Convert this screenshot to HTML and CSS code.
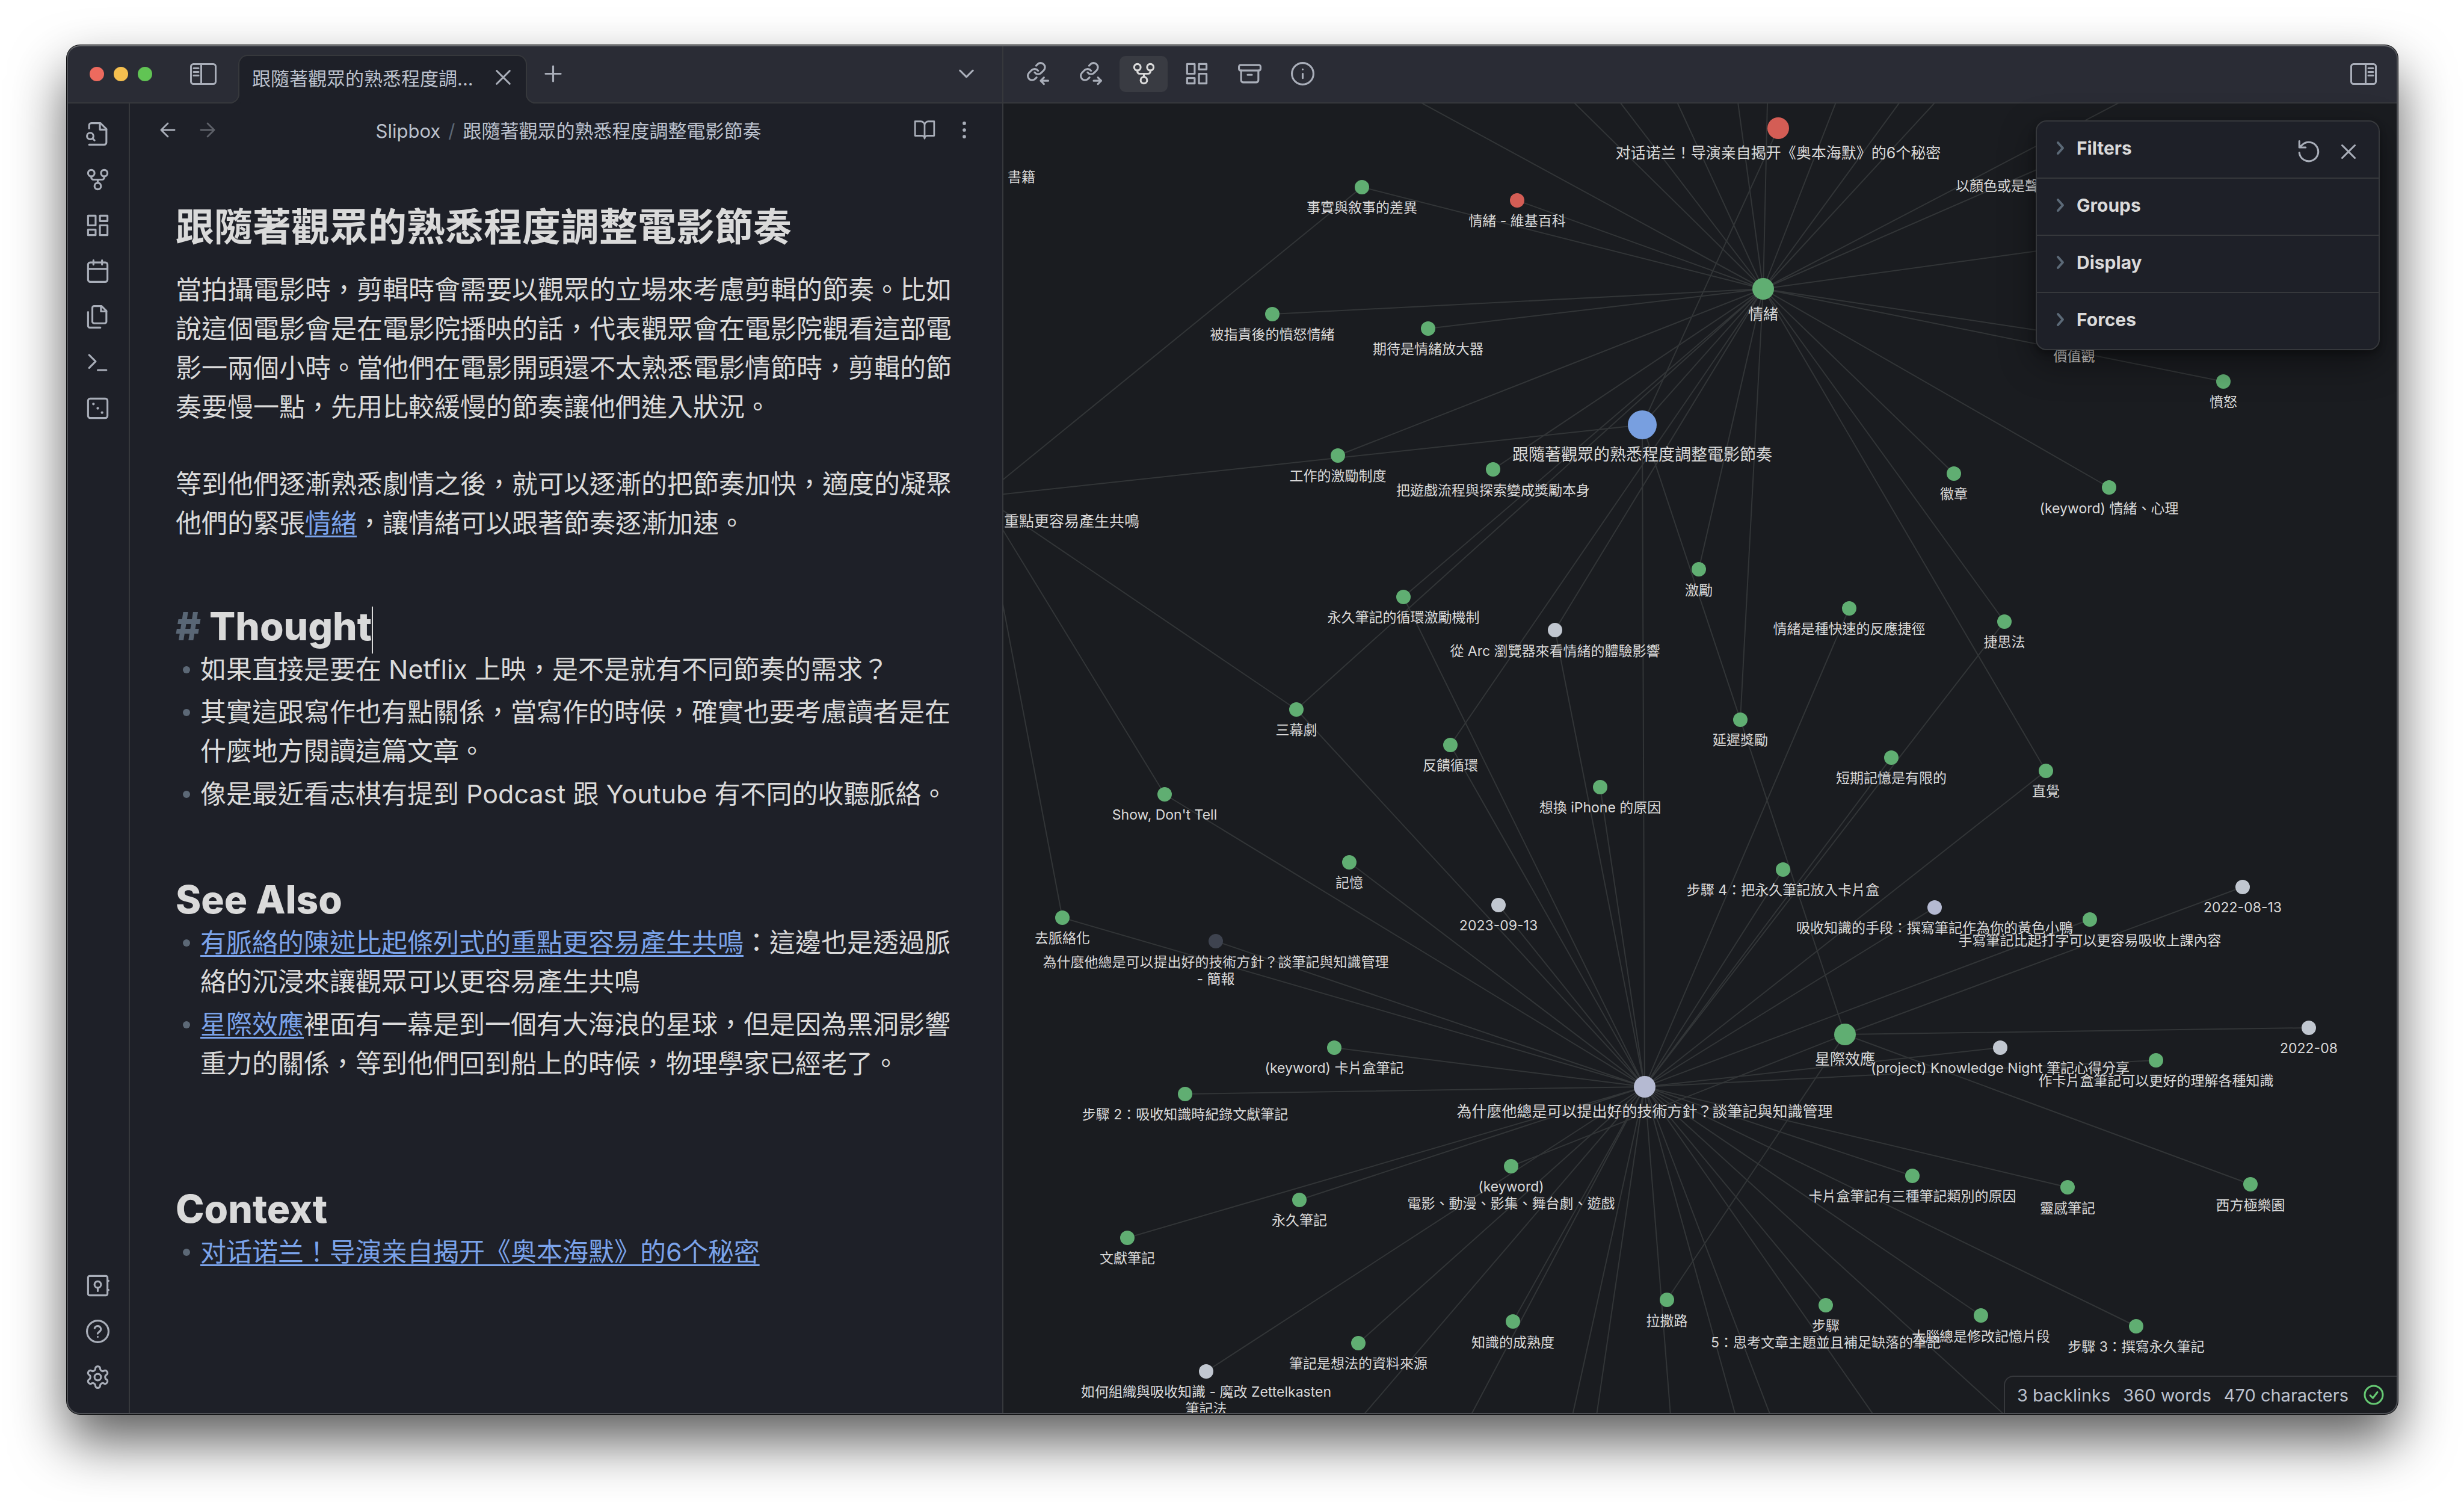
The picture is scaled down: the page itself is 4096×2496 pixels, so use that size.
FILE: index.html
```html
<!DOCTYPE html>
<html lang="zh-Hant">
<head>
<meta charset="utf-8">
<title>跟隨著觀眾的熟悉程度調整電影節奏</title>
<link rel="stylesheet" href="styles.css">
</head>
<body>
<svg class="sprite" aria-hidden="true">
  <symbol id="i-fork" viewBox="0 0 24 24"><circle cx="12" cy="18" r="3"/><circle cx="6" cy="6" r="3"/><circle cx="18" cy="6" r="3"/><path d="M18 9v1a2 2 0 0 1-2 2H8a2 2 0 0 1-2-2V9M12 12v3"/></symbol>
  <symbol id="i-dash" viewBox="0 0 24 24"><path d="M3 3h7v9H3zM14 3h7v5h-7zM14 12h7v9h-7zM3 16h7v5H3z"/></symbol>
  <symbol id="i-x" viewBox="0 0 24 24"><path d="M18 6 6 18M6 6l12 12"/></symbol>
  <symbol id="i-chev" viewBox="0 0 14 24"><path d="m3 3 8 9-8 9"/></symbol>
</svg>
<div class="window">
  <section class="left">
    <header class="bar">
      <div class="lights"><i class="light light-red"></i><i class="light light-yellow"></i><i class="light light-green"></i></div>
      <button class="icon-btn sidebar-btn" aria-label="Toggle left sidebar"><svg class="panel-icon" viewBox="0 0 44 36"><rect x="1.5" y="1.5" width="41" height="33" rx="4"/><path d="M18.5 2v32M6 8.500h8M6 14.500h8M6 20.500h8"/></svg></button>
      <div class="tab"><span>跟隨著觀眾的熟悉程度調...</span><button class="icon-btn tab-close" aria-label="Close tab"><svg class="icon" viewBox="0 0 24 24"><use href="#i-x"/></svg></button></div>
      <button class="icon-btn new-tab" aria-label="New tab"><svg class="icon" viewBox="0 0 24 24"><path d="M12 5v14M5 12h14"/></svg></button>
      <button class="icon-btn tab-list" aria-label="Tab list"><svg class="icon" viewBox="0 0 24 24"><path d="m6 9 6 6 6-6"/></svg></button>
    </header>
    <div class="body">
      <nav class="ribbon">
        <button class="icon-btn" aria-label="Quick switcher"><svg class="icon" viewBox="0 0 24 24"><path d="M4 22h14a2 2 0 0 0 2-2V7.500L14.500 2H6a2 2 0 0 0-2 2v3"/><path d="M14 2v6h6M5 17a3 3 0 1 0 0-6 3 3 0 0 0 0 6zM9 18l-1.500-1.500"/></svg></button>
        <button class="icon-btn" aria-label="Graph view"><svg class="icon" viewBox="0 0 24 24"><use href="#i-fork"/></svg></button>
        <button class="icon-btn" aria-label="Canvas"><svg class="icon" viewBox="0 0 24 24"><use href="#i-dash"/></svg></button>
        <button class="icon-btn" aria-label="Daily note"><svg class="icon" viewBox="0 0 24 24"><rect x="3" y="4" width="18" height="18" rx="2"/><path d="M16 2v4M8 2v4M3 10h18"/></svg></button>
        <button class="icon-btn" aria-label="Templates"><svg class="icon" viewBox="0 0 24 24"><path d="M15.500 2H8.600c-.4 0-.8.2-1.100.5-.3.3-.5.7-.5 1.100v12.800c0 .4.2.8.5 1.100.3.3.7.5 1.100.5h9.800c.4 0 .8-.2 1.100-.5.3-.3.5-.7.5-1.100V6.500L15.500 2z"/><path d="M3 7.600v12.800c0 .4.2.8.5 1.100.3.3.7.5 1.100.5h9.800M15 2v5h5"/></svg></button>
        <button class="icon-btn" aria-label="Command palette"><svg class="icon" viewBox="0 0 24 24"><path d="m4 17 6-6-6-6M12 19h8"/></svg></button>
        <button class="icon-btn" aria-label="Random note"><svg class="icon" viewBox="0 0 24 24"><rect x="3" y="3" width="18" height="18" rx="2"/><path d="M8 8h.01M12 12h.01M16 16h.01" class="dots"/></svg></button>
        <button class="icon-btn push" aria-label="Open another vault"><svg class="icon" viewBox="0 0 24 24"><rect x="3" y="3" width="18" height="18" rx="1.500"/><circle cx="12" cy="11" r="3"/><path d="M12 14v3M21 7.500h1M21 16h1"/></svg></button>
        <button class="icon-btn" aria-label="Help"><svg class="icon" viewBox="0 0 24 24"><circle cx="12" cy="12" r="10"/><path d="M9.090 9a3 3 0 0 1 5.830 1c0 2-3 3-3 4M12 17h.01"/></svg></button>
        <button class="icon-btn" aria-label="Settings"><svg class="icon" viewBox="0 0 24 24"><path d="M12.220 2h-.44a2 2 0 0 0-2 2v.18a2 2 0 0 1-1 1.730l-.43.25a2 2 0 0 1-2 0l-.15-.08a2 2 0 0 0-2.730.73l-.22.38a2 2 0 0 0 .73 2.730l.15.1a2 2 0 0 1 1 1.720v.51a2 2 0 0 1-1 1.740l-.15.09a2 2 0 0 0-.73 2.730l.22.38a2 2 0 0 0 2.730.73l.15-.08a2 2 0 0 1 2 0l.43.25a2 2 0 0 1 1 1.730V20a2 2 0 0 0 2 2h.44a2 2 0 0 0 2-2v-.18a2 2 0 0 1 1-1.730l.43-.25a2 2 0 0 1 2 0l.15.08a2 2 0 0 0 2.730-.73l.22-.39a2 2 0 0 0-.73-2.730l-.15-.08a2 2 0 0 1-1-1.740v-.5a2 2 0 0 1 1-1.740l.15-.09a2 2 0 0 0 .73-2.730l-.22-.38a2 2 0 0 0-2.730-.73l-.15.08a2 2 0 0 1-2 0l-.43-.25a2 2 0 0 1-1-1.730V4a2 2 0 0 0-2-2z"/><circle cx="12" cy="12" r="3"/></svg></button>
      </nav>
      <main class="note">
        <div class="view-header">
          <button class="icon-btn" aria-label="Back"><svg class="icon" viewBox="0 0 24 24"><path d="m12 19-7-7 7-7M19 12H5"/></svg></button>
          <button class="icon-btn faded" aria-label="Forward"><svg class="icon" viewBox="0 0 24 24"><path d="M5 12h14M12 5l7 7-7 7"/></svg></button>
          <div class="crumbs"><span>Slipbox</span><span class="slash">/</span><span>跟隨著觀眾的熟悉程度調整電影節奏</span></div>
          <button class="icon-btn" aria-label="Reading view"><svg class="icon" viewBox="0 0 24 24"><path d="M2 3h6a4 4 0 0 1 4 4v14a3 3 0 0 0-3-3H2zM22 3h-6a4 4 0 0 0-4 4v14a3 3 0 0 1 3-3h7z"/></svg></button>
          <button class="icon-btn" aria-label="More options"><svg class="icon" viewBox="0 0 24 24"><path d="M12 5h.01M12 12h.01M12 19h.01" class="more-dots"/></svg></button>
        </div>
        <article class="editor">
          <h1>跟隨著觀眾的熟悉程度調整電影節奏</h1>
          <p>當拍攝電影時，剪輯時會需要以觀眾的立場來考慮剪輯的節奏。比如說這個電影會是在電影院播映的話，代表觀眾會在電影院觀看這部電影一兩個小時。當他們在電影開頭還不太熟悉電影情節時，剪輯的節奏要慢一點，先用比較緩慢的節奏讓他們進入狀況。</p>
          <p>等到他們逐漸熟悉劇情之後，就可以逐漸的把節奏加快，適度的凝聚他們的緊張<a href="#emotion">情緒</a>，讓情緒可以跟著節奏逐漸加速。</p>
          <h2 class="first"><span class="hash">#</span> Thought<span class="caret"></span></h2>
          <ul>
            <li>如果直接是要在 Netflix 上映，是不是就有不同節奏的需求？</li>
            <li>其實這跟寫作也有點關係，當寫作的時候，確實也要考慮讀者是在什麼地方閱讀這篇文章。</li>
            <li>像是最近看志棋有提到 Podcast 跟 Youtube 有不同的收聽脈絡。</li>
          </ul>
          <h2 class="second">See Also</h2>
          <ul>
            <li><a href="#context">有脈絡的陳述比起條列式的重點更容易產生共鳴</a>：這邊也是透過脈絡的沉浸來讓觀眾可以更容易產生共鳴</li>
            <li><a href="#interstellar">星際效應</a>裡面有一幕是到一個有大海浪的星球，但是因為黑洞影響重力的關係，等到他們回到船上的時候，物理學家已經老了。</li>
          </ul>
          <h2 class="third">Context</h2>
          <ul>
            <li><a href="#nolan">对话诺兰！导演亲自揭开《奥本海默》的6个秘密</a></li>
          </ul>
        </article>
      </main>
    </div>
  </section>
  <section class="right">
    <header class="bar bar-right">
      <button class="icon-btn tool" aria-label="Backlinks"><svg class="icon" viewBox="0 0 24 24"><g transform="translate(.9 .4) scale(.8)" class="chain"><path d="M10 13a5 5 0 0 0 7.540.54l3-3a5 5 0 0 0-7.070-7.070l-1.720 1.710"/><path d="M14 11a5 5 0 0 0-7.540-.54l-3 3a5 5 0 0 0 7.070 7.070l1.710-1.710"/></g><path d="M21.500 18.500h-7M17.500 15.500l-3 3 3 3"/></svg></button>
      <button class="icon-btn tool" aria-label="Outgoing links"><svg class="icon" viewBox="0 0 24 24"><g transform="translate(.9 .4) scale(.8)" class="chain"><path d="M10 13a5 5 0 0 0 7.540.54l3-3a5 5 0 0 0-7.070-7.070l-1.720 1.710"/><path d="M14 11a5 5 0 0 0-7.540-.54l-3 3a5 5 0 0 0 7.070 7.070l1.710-1.710"/></g><path d="M14.500 18.500h7M18.500 15.500l3 3-3 3"/></svg></button>
      <button class="icon-btn tool active" aria-label="Graph"><svg class="icon" viewBox="0 0 24 24"><use href="#i-fork"/></svg></button>
      <button class="icon-btn tool" aria-label="Dashboard"><svg class="icon" viewBox="0 0 24 24"><use href="#i-dash"/></svg></button>
      <button class="icon-btn tool" aria-label="Archive"><svg class="icon" viewBox="0 0 24 24"><rect x="2" y="4" width="20" height="5" rx="1.500"/><path d="M4 9v9a2 2 0 0 0 2 2h12a2 2 0 0 0 2-2V9M10 13h4"/></svg></button>
      <button class="icon-btn tool" aria-label="Info"><svg class="icon" viewBox="0 0 24 24"><circle cx="12" cy="12" r="10"/><path d="M12 16v-4M12 8h.01"/></svg></button>
      <button class="icon-btn sidebar-btn" aria-label="Toggle right sidebar"><svg class="panel-icon" viewBox="0 0 44 36"><rect x="1.500" y="1.500" width="41" height="33" rx="4"/><path d="M25.500 2v32M30 8.500h8M30 14.500h8M30 20.500h8"/></svg></button>
    </header>
    <div class="graph">
      <svg class="canvas" width="100%" height="100%" role="img" aria-label="Graph view">
        <g class="links">
          <path d="M1263 308 693-2M1263 308 948-2M1263 308 1025-2M1263 308 1120-2M1263 308 1221-2M1263 308 1270-2M1263 308 1384-2M1263 308 1490-2M1263 308 1549-2M1263 308 1856-2"/>
          <path d="M1263 308 1736 102M1263 308 1900 220M1263 308 1780 386M1263 308 2028 462M1263 308 1838 638M1263 308 1580 615M1263 308 1664 861M1263 308 1733 1109"/>
          <path d="M1263 308 596 139M1263 308 854 161M1263 308 447 350M1263 308 706 374M1263 308 556 585M1263 308 814 608M1263 308 665 820M1263 308 487 1007M1263 308 743 1066M1263 308 917 875M1263 308 1062 534M1263 308 1156 774M1263 308 1225 1024"/>
          <path d="M1062 534 1288 41M1062 534-35 653M1062 534 1066 1634M1062 534 1399 1547"/>
          <path d="M-35 653 596 139M-35 653 487 1007M-35 653 268 1148M-35 653 98 1353"/>
          <path d="M1066 1634 665 820M1066 1634 487 1007M1066 1634 743 1066M1066 1634 268 1148M1066 1634 575 1261M1066 1634 98 1353M1066 1634 353 1392M1066 1634 823 1332M1066 1634 917 875M1066 1634 992 1136M1066 1634 1406 839M1066 1634 1296 1273M1066 1634 1476 1087M1066 1634 1664 861M1066 1634 1733 1109M1066 1634 1548 1336M1066 1634 1806 1356M1066 1634 1657 1569M1066 1634 1916 1590"/>
          <path d="M1066 1634 550 1569M1066 1634 302 1646M1066 1634 206 1885M1066 1634 492 1822M1066 1634 337 2107M1066 1634 590 2060M1066 1634 847 2024M1066 1634 1511 1782M1066 1634 1769 1801M1066 1634 1367 1997M1066 1634 1625 2014M1066 1634 1883 2032"/>
          <path d="M1066 1634 598 2180M1066 1634 777 2180M1066 1634 946 2180M1066 1634 986 2180M1066 1634 1109 2180M1066 1634 1217 2180M1066 1634 1275 2180M1066 1634 1447 2180M1066 1634 1665 2180"/>
          <path d="M1399 1547 2170 1536M1399 1547 2060 1302M1399 1547 2073 1796M1399 1547 1103 1988M1399 1547 844 1766"/>
        </g>
        <g class="dots-green">
          <circle cx="596" cy="139" r="12"/><circle cx="447" cy="350" r="12"/><circle cx="706" cy="374" r="12"/><circle cx="556" cy="585" r="12"/><circle cx="814" cy="608" r="12"/><circle cx="1263" cy="308" r="18"/><circle cx="1580" cy="615" r="12"/><circle cx="2028" cy="462" r="12"/><circle cx="1838" cy="638" r="12"/><circle cx="665" cy="820" r="12"/><circle cx="487" cy="1007" r="12"/><circle cx="743" cy="1066" r="12"/><circle cx="268" cy="1148" r="12"/><circle cx="575" cy="1261" r="12"/><circle cx="98" cy="1353" r="12"/><circle cx="1156" cy="774" r="12"/><circle cx="1406" cy="839" r="12"/><circle cx="1225" cy="1024" r="12"/><circle cx="1476" cy="1087" r="12"/><circle cx="992" cy="1136" r="12"/><circle cx="1296" cy="1273" r="12"/><circle cx="1664" cy="861" r="12"/><circle cx="1733" cy="1109" r="12"/><circle cx="1806" cy="1356" r="12"/><circle cx="550" cy="1569" r="12"/><circle cx="302" cy="1646" r="12"/><circle cx="492" cy="1822" r="12"/><circle cx="206" cy="1885" r="12"/><circle cx="844" cy="1766" r="12"/><circle cx="847" cy="2024" r="12"/><circle cx="590" cy="2060" r="12"/><circle cx="1103" cy="1988" r="12"/><circle cx="1399" cy="1547" r="18"/><circle cx="1916" cy="1590" r="12"/><circle cx="1511" cy="1782" r="12"/><circle cx="1769" cy="1801" r="12"/><circle cx="2073" cy="1796" r="12"/><circle cx="1367" cy="1997" r="12"/><circle cx="1625" cy="2014" r="12"/><circle cx="1883" cy="2032" r="12"/>
        </g>
        <g class="dots-red"><circle cx="854" cy="161" r="12"/><circle cx="1288" cy="41" r="18"/></g>
        <g class="dots-grey"><circle cx="917" cy="875" r="12"/><circle cx="823" cy="1332" r="12"/><circle cx="2060" cy="1302" r="12"/><circle cx="1657" cy="1569" r="12"/><circle cx="2170" cy="1536" r="12"/><circle cx="337" cy="2107" r="12"/></g>
        <g class="dots-lavender"><circle cx="1548" cy="1336" r="12"/><circle cx="1066" cy="1634" r="18"/></g>
        <circle class="dot-dark" cx="353" cy="1392" r="12"/>
        <circle class="dot-active" cx="1062" cy="534" r="24"/>
        <g class="labels">
          <text x="30" y="130">書籍</text>
          <text x="596" y="181">事實與敘事的差異</text>
          <text x="854" y="203">情緒 - 維基百科</text>
          <text x="447" y="392">被指責後的憤怒情緒</text>
          <text x="706" y="416">期待是情緒放大器</text>
          <text x="556" y="627">工作的激勵制度</text>
          <text x="814" y="651">把遊戲流程與探索變成獎勵本身</text>
          <text x="1583" y="145" class="start">以顏色或是聲</text>
          <text x="1780" y="428">價值觀</text>
          <text x="2028" y="504">憤怒</text>
          <text x="1580" y="657">徽章</text>
          <text x="1838" y="681">(keyword) 情緒、心理</text>
          <text x="665" y="862">永久筆記的循環激勵機制</text>
          <text x="487" y="1049">三幕劇</text>
          <text x="743" y="1108">反饋循環</text>
          <text x="268" y="1190">Show, Don't Tell</text>
          <text x="575" y="1303">記憶</text>
          <text x="98" y="1395">去脈絡化</text>
          <text x="353" y="1435">為什麼他總是可以提出好的技術方針？談筆記與知識管理<tspan x="353" dy="28">- 簡報</tspan></text>
          <text x="1156" y="817">激勵</text>
          <text x="917" y="918">從 Arc 瀏覽器來看情緒的體驗影響</text>
          <text x="1406" y="881">情緒是種快速的反應捷徑</text>
          <text x="1225" y="1066">延遲獎勵</text>
          <text x="1476" y="1129">短期記憶是有限的</text>
          <text x="992" y="1178">想換 iPhone 的原因</text>
          <text x="1296" y="1315">步驟 4：把永久筆記放入卡片盒</text>
          <text x="823" y="1374">2023-09-13</text>
          <text x="1548" y="1378">吸收知識的手段：撰寫筆記作為你的黃色小鴨</text>
          <text x="1806" y="1399">手寫筆記比起打字可以更容易吸收上課內容</text>
          <text x="1664" y="903">捷思法</text>
          <text x="1733" y="1151">直覺</text>
          <text x="2060" y="1344">2022-08-13</text>
          <text x="550" y="1611">(keyword) 卡片盒筆記</text>
          <text x="302" y="1688">步驟 2：吸收知識時紀錄文獻筆記</text>
          <text x="492" y="1864">永久筆記</text>
          <text x="206" y="1927">文獻筆記</text>
          <text x="844" y="1808">(keyword)<tspan x="844" dy="28">電影、動漫、影集、舞台劇、遊戲</tspan></text>
          <text x="847" y="2067">知識的成熟度</text>
          <text x="590" y="2102">筆記是想法的資料來源</text>
          <text x="1103" y="2031">拉撒路</text>
          <text x="337" y="2149">如何組織與吸收知識 - 魔改 Zettelkasten<tspan x="337" dy="28">筆記法</tspan></text>
          <text x="1657" y="1611">(project) Knowledge Night 筆記心得分享</text>
          <text x="1916" y="1632">作卡片盒筆記可以更好的理解各種知識</text>
          <text x="2170" y="1578">2022-08</text>
          <text x="1511" y="1824">卡片盒筆記有三種筆記類別的原因</text>
          <text x="1769" y="1844">靈感筆記</text>
          <text x="2073" y="1839">西方極樂園</text>
          <text x="1367" y="2039">步驟<tspan x="1367" dy="28">5：思考文章主題並且補足缺落的筆記</tspan></text>
          <text x="1625" y="2057">大腦總是修改記憶片段</text>
          <text x="1883" y="2074">步驟 3：撰寫永久筆記</text>
        </g>
        <g class="labels labels-big">
          <text x="1288" y="91">对话诺兰！导演亲自揭开《奥本海默》的6个秘密</text>
          <text x="1263" y="359">情緒</text>
          <text x="226" y="703" class="end">有脈絡的陳述比起條列式的重點更容易產生共鳴</text>
          <text x="1066" y="1684">為什麼他總是可以提出好的技術方針？談筆記與知識管理</text>
          <text x="1399" y="1597">星際效應</text>
        </g>
        <text class="label-active" x="1062" y="593">跟隨著觀眾的熟悉程度調整電影節奏</text>
      </svg>
      <div class="controls">
        <button class="row"><svg class="chev" viewBox="0 0 14 24"><use href="#i-chev"/></svg>Filters</button>
        <button class="row"><svg class="chev" viewBox="0 0 14 24"><use href="#i-chev"/></svg>Groups</button>
        <button class="row"><svg class="chev" viewBox="0 0 14 24"><use href="#i-chev"/></svg>Display</button>
        <button class="row"><svg class="chev" viewBox="0 0 14 24"><use href="#i-chev"/></svg>Forces</button>
        <div class="control-actions">
          <button class="icon-btn" aria-label="Restore defaults"><svg class="icon" viewBox="0 0 24 24"><path d="M3 2v6h6M3 13a9 9 0 1 0 3-7.700L3 8"/></svg></button>
          <button class="icon-btn" aria-label="Close"><svg class="icon" viewBox="0 0 24 24"><use href="#i-x"/></svg></button>
        </div>
      </div>
      <footer class="status"><span>3 backlinks</span><span>360 words</span><span>470 characters</span><svg class="sync" viewBox="0 0 24 24"><circle cx="12" cy="12" r="10"/><path d="m8 12.500 3 3 5-6.500"/></svg></footer>
    </div>
  </section>
</div>
</body>
</html>
```
FILE: styles.css
```css
* { box-sizing: border-box; }

body {
  margin: 0;
  height: 100vh;
  padding: 75px 110px 146px 111px;
  background: #fff;
  color: #dadada;
  font-family: Inter, "Noto Sans CJK TC", sans-serif;
  text-spacing-trim: space-all;
  overflow: hidden;
}
.sprite { display: none; }

.window {
  position: relative;
  height: 100%;
  display: grid;
  grid-template-columns: 1557fr 2318fr;
  border-radius: 22px;
  background: #1e2028;
  box-shadow: 0 0 0 1px #0b0c0e, 0 45px 90px rgba(0, 0, 0, .64);
}
.window::after {
  content: "";
  position: absolute;
  inset: 0;
  border: 2px solid #505257;
  border-top-color: #6a6c70;
  border-radius: 22px;
  pointer-events: none;
}

.left, .right { display: flex; flex-direction: column; min-width: 0; min-height: 0; overflow: hidden; }
.left { border-right: 2px solid #36383c; border-radius: 22px 0 0 22px; }
.right { border-radius: 0 22px 22px 0; background: #1a1c20; }

/* Icons and buttons */
button { font: inherit; color: inherit; background: none; border: 0; padding: 0; }
.icon-btn { display: flex; align-items: center; justify-content: center; width: 60px; height: 60px; flex: none; color: #a9aeb9; }
.icon, .panel-icon, .chev, .sync { fill: none; stroke: currentColor; stroke-width: 1.75; stroke-linecap: round; stroke-linejoin: round; }
.icon { width: 43px; height: 43px; }
.panel-icon { width: 44px; height: 36px; stroke-width: 3; }
.chain { stroke-width: 2.2; }
.dots { stroke-width: 2.4; }
.more-dots { stroke-width: 3.6; }

/* Title bar */
.bar {
  display: flex;
  align-items: center;
  height: 97px;
  flex: none;
  background: #2a2c35;
  border-bottom: 2px solid #36383c;
}
.lights { display: flex; gap: 16px; margin: 0 55px 0 38px; }
.light { width: 24px; height: 24px; border-radius: 50%; }
.light-red { background: #ed6a5e; }
.light-yellow { background: #f5bf4f; }
.light-green { background: #61c454; }
.tab {
  position: relative;
  display: flex;
  align-items: center;
  justify-content: space-between;
  align-self: flex-end;
  width: 480px;
  height: 81px;
  margin: 0 18px -2px 28px;
  padding: 0 16px 8px 21px;
  border: 2px solid #36383c;
  border-bottom: 0;
  border-radius: 16px 16px 0 0;
  background: #1e2028;
  color: #bcc2ce;
  font-size: 31px;
  white-space: nowrap;
}
.tab::before, .tab::after {
  content: "";
  position: absolute;
  bottom: 0;
  width: 16px;
  height: 16px;
  border-bottom: 2px solid #36383c;
}
.tab::before { right: 100%; border-right: 2px solid #36383c; border-bottom-right-radius: 16px; box-shadow: 5px 5px 0 #1e2028; clip-path: inset(0 -2px 0 0); }
.tab::after { left: 100%; border-left: 2px solid #36383c; border-bottom-left-radius: 16px; box-shadow: -5px 5px 0 #1e2028; clip-path: inset(0 0 0 -2px); }
.tab-close { width: 44px; height: 44px; }
.new-tab { width: 50px; }
.tab-list { width: 50px; margin: 0 35px 0 auto; }
.bar-right { gap: 8px; padding: 0 27px 0 17px; }
.tool { width: 80px; border-radius: 10px; }
.tool.active { background: #393b42; color: #dadada; }
.bar-right .sidebar-btn { margin-left: auto; }

/* Left pane */
.body { display: flex; flex: 1; min-height: 0; }
.ribbon {
  display: flex;
  flex-direction: column;
  align-items: center;
  gap: 16px;
  width: 105px;
  padding: 20px 0 32px;
  border-right: 2px solid #36383c;
}
.push { margin-top: auto; }
.note { flex: 1; min-width: 0; }
.view-header { display: flex; align-items: center; gap: 6px; height: 87px; padding: 0 33px; color: #bcc2ce; font-size: 31px; }
.view-header .icon { width: 38px; height: 38px; }
.faded { color: #5d6068; }
.crumbs { display: flex; align-items: baseline; justify-content: center; gap: 13px; flex: 1; padding-left: 8px; white-space: nowrap; }
.slash { color: #5c6876; }

.editor { padding: 79px 76px 0; font-size: 43px; line-height: 65px; }
.editor h1, .editor h2 { margin: 0; font-size: 64px; line-height: 78px; font-weight: 700; }
.editor h2 { height: 78px; font-weight: 800; }
.editor h1 { margin-bottom: 33px; }
.editor p { margin: 0 0 63px; }
.editor .first { margin-top: 100px; }
.editor .second { margin-top: 104px; }
.editor .third { margin-top: 170px; }
.hash { color: #596675; }
.caret { display: inline-block; width: 2px; height: 78px; margin: -10px -2px -10px 0; background: #dadada; vertical-align: middle; }
.editor ul { display: flex; flex-direction: column; gap: 6px; margin: 0; padding: 0 0 0 41px; list-style: none; }
.editor li { position: relative; }
.editor li::before {
  content: "";
  position: absolute;
  left: -29px;
  top: 27px;
  width: 12px;
  height: 12px;
  border-radius: 50%;
  background: #5c6876;
}
.editor a { color: #7ba3ea; text-decoration-thickness: 3px; text-underline-offset: 5px; text-decoration-skip-ink: none; }

/* Graph */
.graph { position: relative; flex: 1; min-height: 0; }
.canvas { display: block; position: absolute; inset: 0; }
.links { stroke: #323537; stroke-width: 2; fill: none; }
.dots-green { fill: #60ae72; }
.dots-red { fill: #d45d55; }
.dots-grey { fill: #c1c7d0; }
.dots-lavender { fill: #b5bad2; }
.dot-dark { fill: #3e434f; }
.dot-active { fill: #789fe0; }
.labels { fill: #dadada; font-size: 23px; text-anchor: middle; }
.labels-big { font-size: 25px; }
.label-active { fill: #dadada; font-size: 27px; text-anchor: middle; }
.start { text-anchor: start; }
.end { text-anchor: end; }

.controls {
  position: absolute;
  top: 28px;
  right: 30px;
  width: 572px;
  border: 2px solid #36383c;
  border-radius: 18px;
  background: #1e2028;
  box-shadow: 0 6px 12px rgba(0, 0, 0, .3), 0 20px 60px rgba(0, 0, 0, .4);
}
.row { display: flex; align-items: center; gap: 20px; width: 100%; height: 95px; padding: 0 0 6px 32px; font-size: 30px; font-weight: 700; }
.row:first-child { height: 93px; }
.row + .row { border-top: 2px solid #36383c; }
.chev { width: 14px; height: 24px; color: #5b6977; stroke-width: 4; }
.control-actions { position: absolute; top: 20px; right: 20px; display: flex; gap: 6px; }
.control-actions .icon { width: 42px; height: 42px; }

.status {
  position: absolute;
  right: 0;
  bottom: 0;
  display: flex;
  align-items: center;
  gap: 24px;
  height: 64px;
  padding: 0 22px 2px 20px;
  border: 2px solid #36383c;
  border-width: 2px 0 0 2px;
  border-top-left-radius: 16px;
  background: #1a1c20;
  color: #bcc2ce;
  font-size: 29px;
}
.status span + span { margin-left: -3px; }
.sync { width: 36px; height: 36px; color: #66c973; stroke-width: 2; }
```
